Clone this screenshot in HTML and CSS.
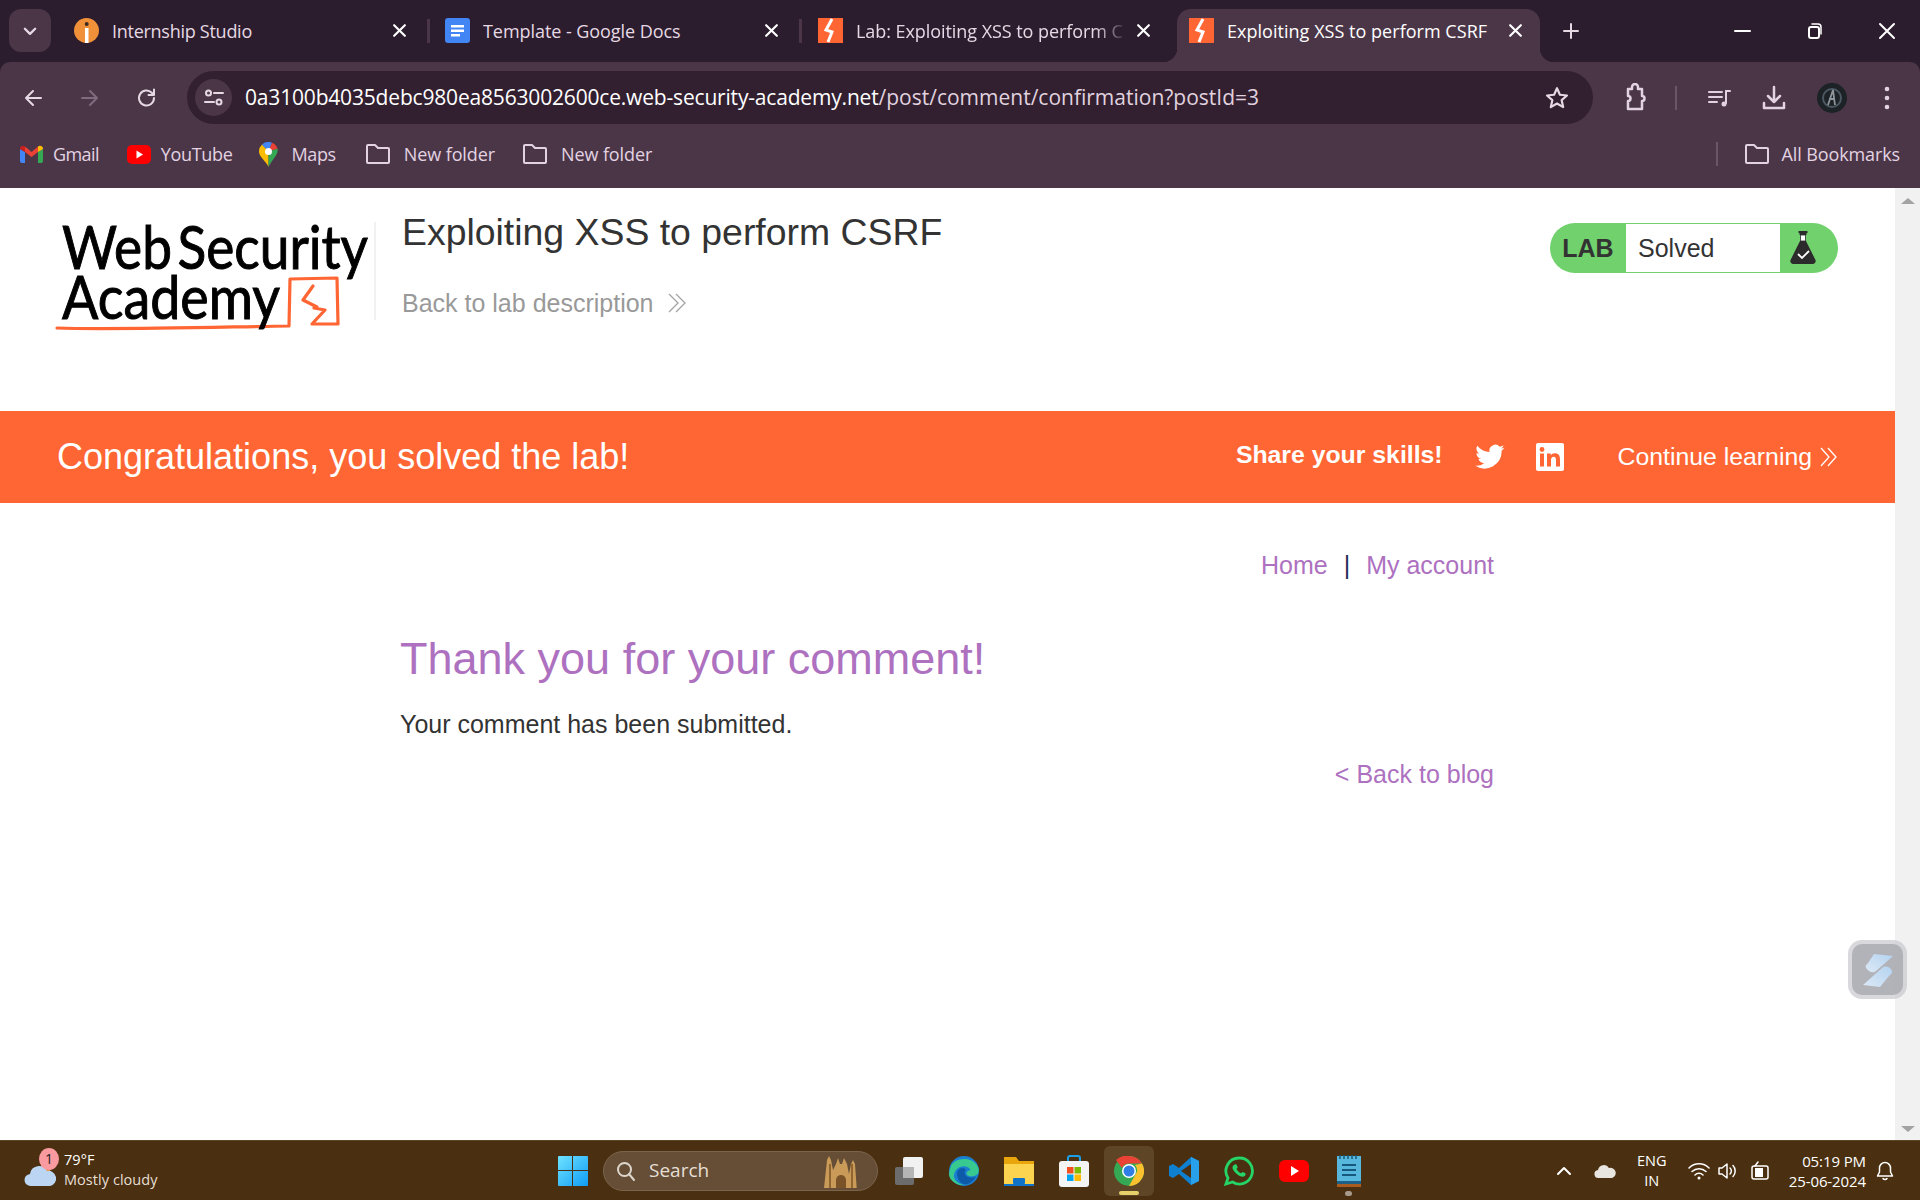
FILE: index.html
```html
<!DOCTYPE html>
<html lang="en">
<head>
<meta charset="utf-8">
<title>Exploiting XSS to perform CSRF</title>
<link rel="stylesheet" href="styles.css">
</head>
<body>
<div class="app">
  <div class="tabstrip">
    <div class="tab-menu"><svg width="16" height="16" viewBox="0 0 14 14"><path d="M2.5 5l4.500 4.500L11.500 5" class="st-light w2"/></svg></div>
    <div class="tab">
      <svg class="favicon" viewBox="0 0 25 25"><circle cx="12.500" cy="12.500" r="12.500" fill="#f0913a"/><rect x="11" y="10" width="3.500" height="15" fill="#fff"/><circle cx="12.700" cy="6" r="2" fill="#3a2a20"/></svg>
      <span class="tab-title">Internship Studio</span><svg class="tab-x" viewBox="0 0 14 14"><path d="M2 2l10 10M12 2L2 12" class="st-white w2"/></svg>
    </div>
    <i class="tab-sep"></i>
    <div class="tab tab-docs">
      <svg class="favicon" viewBox="0 0 25 25"><rect x="0" y="0" width="25" height="25" rx="3" fill="#4285f4"/><path d="M6 7h13v2.500H6zM6 11.500h13V14H6zM6 16h9v2.500H6z" fill="#fff"/></svg>
      <span class="tab-title tab-mid">Template - Google Docs</span><svg class="tab-x" viewBox="0 0 14 14"><path d="M2 2l10 10M12 2L2 12" class="st-white w2"/></svg>
    </div>
    <i class="tab-sep"></i>
    <div class="tab">
      <svg class="favicon" viewBox="0 0 25 25"><rect width="25" height="25" fill="#ff6633"/><path d="M14 1l-6 11 6 2-4 10" fill="none" stroke="#fff" stroke-width="3"/></svg>
      <span class="tab-title tab-mid tab-fade">Lab: Exploiting XSS to perform C</span><svg class="tab-x" viewBox="0 0 14 14"><path d="M2 2l10 10M12 2L2 12" class="st-white w2"/></svg>
    </div>
    <i class="tab-sep tab-sep-off"></i>
    <div class="tab tab-active">
      <svg class="favicon" viewBox="0 0 25 25"><rect width="25" height="25" fill="#ff6633"/><path d="M14 1l-6 11 6 2-4 10" fill="none" stroke="#fff" stroke-width="3"/></svg>
      <span class="tab-title tab-wide">Exploiting XSS to perform CSRF</span><svg class="tab-x" viewBox="0 0 14 14"><path d="M2 2l10 10M12 2L2 12" class="st-white w2"/></svg>
    </div>
    <svg class="tab-plus" width="20" height="20" viewBox="0 0 20 20"><path d="M10 3v14M3 10h14" class="st-light w2"/></svg>
    <div class="win-controls">
      <svg width="20" height="20" viewBox="0 0 20 20"><path d="M2 10h15" class="st-white w2"/></svg>
      <svg width="20" height="20" viewBox="0 0 20 20"><rect x="4" y="6" width="10" height="11" rx="2" class="st-white w2"/><path d="M7 3h6a3 3 0 0 1 3 3v7" class="st-white w15"/></svg>
      <svg width="20" height="20" viewBox="0 0 20 20"><path d="M3 3l14 14M17 3L3 17" class="st-white w2"/></svg>
    </div>
  </div>

  <div class="toolbar">
    <div class="nav-btns">
      <svg width="24" height="24" viewBox="0 0 24 24"><path d="M20 12H5M12 5l-7 7 7 7" class="st-light w2"/></svg>
      <svg width="24" height="24" viewBox="0 0 24 24"><path d="M4 12h15M12 5l7 7-7 7" class="st-dim w2"/></svg>
      <svg width="24" height="24" viewBox="0 0 24 24"><path d="M19 12a7.500 7.500 0 1 1-2.200-5.300L19 9M19 3.500V9h-5.500" class="st-light w2"/></svg>
    </div>
    <div class="omnibox">
      <div class="site-info"><svg width="22" height="22" viewBox="0 0 22 22"><circle cx="5.500" cy="6" r="2.500" class="st-light w2"/><path d="M11 6h9M2 15h9" class="st-light w2"/><circle cx="16" cy="15" r="2.500" class="st-light w2"/></svg></div>
      <div class="url"><span class="url-host">0a3100b4035debc980ea8563002600ce.web-security-academy.net</span><span class="url-path">/post/comment/confirmation?postId=3</span></div>
      <svg class="star" width="26" height="26" viewBox="0 0 24 24"><path d="M12 3l2.700 6 6.500.7-4.900 4.300 1.400 6.400L12 17.100l-5.700 3.300 1.400-6.400-4.900-4.300 6.500-.7z" class="st-light w2"/></svg>
    </div>
    <div class="tool-icons">
      <svg class="ti-ext" width="26" height="30" viewBox="0 0 26 30"><path d="M6 6h4V4a3 3 0 0 1 6 0v2h4v7a2.500 2.500 0 0 1 0 5v8H6v-8a2.500 2.500 0 0 0 0-5z" class="st-pale w25"/></svg>
      <i class="ti-sep"></i>
      <svg class="ti-media" width="26" height="26" viewBox="0 0 26 26"><path d="M3 7h13M3 12h13M3 17h8" class="st-pale w2"/><path d="M20 6v12" class="st-pale w2"/><circle cx="18" cy="19" r="2.500" fill="#e3d3e2"/><path d="M20 6h4" class="st-pale w2"/></svg>
      <svg class="ti-down" width="28" height="28" viewBox="0 0 28 28"><path d="M14 3v15M8 12l6 6 6-6" class="st-pale w25"/><path d="M4 19v5h20v-5" class="st-pale w25"/></svg>
      <svg class="ti-avatar" width="32" height="32" viewBox="0 0 32 32"><circle cx="16" cy="16" r="15" fill="#1d2226"/><circle cx="16" cy="16" r="9" fill="none" stroke="#4b5862" stroke-width="2"/><path d="M12 23l5-15 2 15M13 17h6" fill="none" stroke="#8d969c" stroke-width="1.800"/></svg>
      <svg class="ti-more" width="8" height="26" viewBox="0 0 8 26"><circle cx="4" cy="4" r="2.300" fill="#e3d3e2"/><circle cx="4" cy="13" r="2.300" fill="#e3d3e2"/><circle cx="4" cy="22" r="2.300" fill="#e3d3e2"/></svg>
    </div>
  </div>

  <div class="bookmarks">
    <div class="bm bm-gmail"><svg width="23" height="18" viewBox="0 0 23 18"><path d="M0 4v12a2 2 0 0 0 2 2h3V7z" fill="#4285f4"/><path d="M23 4v12a2 2 0 0 1-2 2h-3V7z" fill="#34a853"/><path d="M5 7l6.500 5L18 7V1.500L11.500 7 5 1.500z" fill="#ea4335"/><path d="M0 4a3 3 0 0 1 5-2.500V7z" fill="#c5221f"/><path d="M23 4a3 3 0 0 0-5-2.500V7z" fill="#fbbc04"/></svg><span>Gmail</span></div>
    <div class="bm bm-yt"><svg width="24" height="19" viewBox="0 0 24 19"><rect width="24" height="19" rx="5" fill="#ff0000"/><path d="M9.500 5.500l6.500 4-6.500 4z" fill="#fff"/></svg><span>YouTube</span></div>
    <div class="bm bm-maps"><svg width="19" height="25" viewBox="0 0 19 25"><path d="M9.500 25C7 19 0 15 0 9.500a9.500 9.500 0 0 1 3-7L9.500 9.500z" fill="#fbbc04"/><path d="M3 2.500A9.500 9.500 0 0 1 13 .7L9.500 9.500z" fill="#4285f4"/><path d="M13 .7a9.500 9.500 0 0 1 5.500 6L9.500 9.500z" fill="#ea4335"/><path d="M18.500 6.700c1.500 5-5.500 11-9 18.300V9.500z" fill="#34a853"/><circle cx="9.500" cy="9.500" r="3.500" fill="#fff"/></svg><span>Maps</span></div>
    <div class="bm bm-f1"><svg class="folder" viewBox="0 0 26 22"><path d="M2 3a1 1 0 0 1 1-1h7l3 3h10a1 1 0 0 1 1 1v13a1 1 0 0 1-1 1H3a1 1 0 0 1-1-1z" class="st-pale w2"/></svg><span>New folder</span></div>
    <div class="bm bm-f2"><svg class="folder" viewBox="0 0 26 22"><path d="M2 3a1 1 0 0 1 1-1h7l3 3h10a1 1 0 0 1 1 1v13a1 1 0 0 1-1 1H3a1 1 0 0 1-1-1z" class="st-pale w2"/></svg><span>New folder</span></div>
    <i class="bm-sep"></i>
    <div class="bm bm-all"><svg class="folder" viewBox="0 0 26 22"><path d="M2 3a1 1 0 0 1 1-1h7l3 3h10a1 1 0 0 1 1 1v13a1 1 0 0 1-1 1H3a1 1 0 0 1-1-1z" class="st-pale w2"/></svg><span>All Bookmarks</span></div>
  </div>

  <div class="viewport">
    <main class="page">
      <header class="lab-header">
        <svg class="logo" viewBox="0 188 376 150" role="img" aria-label="Web Security Academy">
          <path d="M57 328C110 330 220 327 289 326L290 279L337 278L338 324L312 324L325 310L314 308L317 307L303 300L313 286" class="logo-mark"/>
          <text x="62" y="269" textLength="306" lengthAdjust="spacingAndGlyphs" class="logo-text logo-line1">Web Security</text>
          <text x="62" y="319" textLength="218" lengthAdjust="spacingAndGlyphs" class="logo-text">Academy</text>
          <path d="M375 222v98" stroke="#e3e3e3" stroke-width="1"/>
        </svg>
        <div class="lab-title">
          <h2>Exploiting XSS to perform CSRF</h2>
          <a class="back-lab">Back to lab description <svg class="chev" width="20" height="20" viewBox="0 0 20 20"><path d="M2 1l9 9-9 9M9 1l9 9-9 9" fill="none" stroke="#a3a3a3" stroke-width="1.300"/></svg></a>
        </div>
        <div class="lab-status">
          <span class="lab-label">LAB</span>
          <span class="lab-state">Solved</span>
          <span class="lab-flask"><svg width="26" height="34" viewBox="0 0 26 34"><path d="M8.500 0h9v2h-1v2h-7V2h-1z" fill="#2b2b2b"/><path d="M10.500 4h5v6h-5z" fill="#fff" stroke="#2b2b2b" stroke-width="0.800"/><path d="M10 10h6l9.500 19a3 3 0 0 1-3 4H3.500a3 3 0 0 1-3-4z" fill="#2b2b2b"/><path d="M8 23l4 4 7-7" fill="none" stroke="#fff" stroke-width="1.800"/></svg></span>
        </div>
      </header>

      <section class="banner">
        <p class="banner-msg">Congratulations, you solved the lab!</p>
        <div class="banner-right">
          <strong class="share">Share your skills!</strong>
          <svg class="tw" width="30" height="26" viewBox="0 0 24 20"><path d="M23.500 2.400c-.9.400-1.800.7-2.800.8 1-.6 1.800-1.500 2.100-2.700-.9.600-2 1-3 1.200A4.800 4.800 0 0 0 11.600 6C7.700 5.800 4.200 3.900 1.800.9c-1.300 2.200-.6 5 1.500 6.400-.8 0-1.500-.2-2.200-.6 0 2.300 1.600 4.300 3.900 4.800-.7.200-1.400.2-2.200.1.600 1.900 2.400 3.300 4.500 3.400A9.700 9.700 0 0 1 .2 17a13.700 13.700 0 0 0 21.100-12.100c1-.7 1.700-1.500 2.200-2.500z" fill="#fff"/></svg>
          <svg class="li" width="28" height="28" viewBox="0 0 28 28"><rect width="28" height="28" rx="2" fill="#fff"/><rect x="4" y="10.500" width="4" height="13" fill="#ff6633"/><circle cx="6" cy="6.500" r="2.400" fill="#ff6633"/><path d="M11 10.500h3.800v1.900c.7-1.300 2.200-2.200 4-2.200 3.700 0 5.200 2.300 5.200 6v7.300h-4v-6.500c0-1.800-.5-3.300-2.300-3.300s-2.700 1.400-2.700 3.300v6.500h-4z" fill="#ff6633"/></svg>
          <a class="continue">Continue learning</a>
          <svg class="chev-w" width="18" height="20" viewBox="0 0 18 20"><path d="M1 1l8 9-8 9M8 1l8 9-8 9" fill="none" stroke="#fff" stroke-width="1.300"/></svg>
        </div>
      </section>

      <section class="content">
        <nav class="top-links"><a>Home</a><span class="pipe">|</span><a>My account</a></nav>
        <h1>Thank you for your comment!</h1>
        <p class="msg">Your comment has been submitted.</p>
        <div class="back-blog"><a>&lt; Back to blog</a></div>
      </section>
    </main>
    <aside class="scrollbar">
      <i class="arrow-up"></i>
      <i class="arrow-down"></i>
    </aside>
    <div class="float-widget">
      <div class="float-inner"><svg width="30" height="36" viewBox="0 0 30 36"><defs><linearGradient id="sg" x1="0" y1="1" x2="1" y2="0"><stop offset="0" stop-color="#dce9f6"/><stop offset="1" stop-color="#b4d3f0"/></linearGradient></defs><path d="M11 2l19 2L13 19c-3 3-8 0-10-3-1-2 0-3 2-5z" fill="url(#sg)"/><path d="M19 16c3-3 9-1 10 3 .5 2-1 3-3 5l-9 11-17-2z" fill="url(#sg)"/></svg></div>
    </div>
  </div>

  <footer class="taskbar">
    <div class="weather">
      <svg class="cloud" width="34" height="28" viewBox="0 0 34 28"><circle cx="22" cy="9" r="5" fill="#f08a2c"/><path d="M7 27a6 6 0 0 1-1-12 9 9 0 0 1 17-3 7.500 7.500 0 0 1 3 15z" fill="#bcd5f2"/></svg>
      <span class="badge">1</span>
      <div class="weather-text"><span class="temp">79°F</span><span class="cond">Mostly cloudy</span></div>
    </div>
    <div class="task-center">
      <svg class="winlogo" width="30" height="30" viewBox="0 0 30 30"><defs><linearGradient id="wl" x1="0" y1="0" x2="1" y2="1"><stop offset="0" stop-color="#6fe3ff"/><stop offset="1" stop-color="#0f9cf5"/></linearGradient></defs><path d="M0 1a1 1 0 0 1 1-1h13v14H0zM15 0h14a1 1 0 0 1 1 1v13H15zM0 15h14v15H1a1 1 0 0 1-1-1zM15 15h15v14a1 1 0 0 1-1 1H15z" fill="url(#wl)"/></svg>
      <div class="search">
        <svg width="22" height="22" viewBox="0 0 22 22"><circle cx="9.500" cy="9.500" r="6.500" class="st-search w2"/><path d="M14 14l5 6" class="st-search w2"/></svg>
        <span class="search-label">Search</span>
        <svg class="cathedral" width="38" height="34" viewBox="0 0 38 34"><path d="M2 34L5 6l2-4 2 4 2 10 3-6 2-6 2 6 2 0 2-6 3 6 2 10 2-10 2-4 2 4 2 28z" fill="#c99a58"/><path d="M14 34v-8a5 5 0 0 1 10 0v8z" fill="#7a5428"/><path d="M8 10v24M30 10v24" stroke="#8f6630" stroke-width="2"/></svg>
      </div>
      <div class="task-apps">
        <div class="app-slot"><svg width="30" height="30" viewBox="0 0 30 30"><rect x="1" y="11" width="19" height="18" rx="2" fill="#6c6c6c"/><rect x="9" y="1" width="20" height="21" rx="2" fill="#f1f1f1"/><rect x="9" y="11" width="11" height="11" fill="#b5b5b5"/></svg></div>
        <div class="app-slot"><svg width="32" height="32" viewBox="0 0 32 32"><circle cx="16" cy="16" r="15" fill="#1b7fd1"/><path d="M3 11C6 3 24 0 30 12c2 5 0 8-4 9-5 1-9-1-7-4 1-2 4-1 3-3C18 9 7 11 6 20c-1 4 4 9 10 10-7 1-14-4-15-10 0-3 1-6 2-9z" fill="#37c98f"/><path d="M9 19c0-6 7-8 9-4-2 1-2 5 2 7 3 1 6 1 8-1-2 5-7 9-12 8-4-1-7-5-7-10z" fill="#0d5aa8"/></svg></div>
        <div class="app-slot"><svg width="30" height="32" viewBox="0 0 30 32"><path d="M0 2h12l3 4h15v25H0z" fill="#e8a50c"/><path d="M0 9h30v22H0z" fill="#fcd44f"/><rect x="9" y="23" width="12" height="6" rx="1" fill="#1173c7"/><rect x="0" y="29" width="30" height="2" fill="#1173c7"/></svg></div>
        <div class="app-slot"><svg width="30" height="32" viewBox="0 0 30 32"><path d="M9 8V3a2 2 0 0 1 2-2h8a2 2 0 0 1 2 2v5" fill="none" stroke="#19a0e8" stroke-width="2"/><rect y="6" width="30" height="26" rx="3" fill="#f4f4f4"/><rect x="8" y="12" width="6.500" height="6.500" fill="#f25022"/><rect x="15.500" y="12" width="6.500" height="6.500" fill="#7fba00"/><rect x="8" y="19.500" width="6.500" height="6.500" fill="#00a4ef"/><rect x="15.500" y="19.500" width="6.500" height="6.500" fill="#ffb900"/></svg></div>
        <div class="app-slot app-current"><svg width="30" height="30" viewBox="0 0 30 30"><circle cx="15" cy="15" r="15" fill="#34a853"/><path d="M15 0a15 15 0 0 1 13 7.500H15A7.500 7.500 0 0 0 8 12L2 4A15 15 0 0 1 15 0z" fill="#ea4335"/><path d="M28 7.500A15 15 0 0 1 15 30l6.500-11.500A7.500 7.500 0 0 0 21 9z" fill="#fbc02d"/><circle cx="15" cy="15" r="7" fill="#fff"/><circle cx="15" cy="15" r="5.500" fill="#2e7ee6"/></svg><i class="app-bar"></i></div>
        <div class="app-slot"><svg width="30" height="30" viewBox="0 0 30 30"><path d="M22 1l8 4v20l-8 4-12-11-6 4-4-2V10l4-2 6 4z" fill="#0f7fd0"/><path d="M22 1v28l8-4V5z" fill="#29a0ea"/><path d="M22 8L12 15l10 7z" fill="#4a2f10"/></svg></div>
        <div class="app-slot"><svg width="30" height="30" viewBox="0 0 30 30"><path d="M15 2a13 13 0 0 0-11 20L2 28l6.500-2A13 13 0 1 0 15 2z" fill="none" stroke="#25d366" stroke-width="2.800"/><path d="M10 9c1-1 2.500-1 3 .5l.7 2-1.200 1.500c1 2 2.500 3.300 4.500 4.300l1.500-1.300 2.500 1c1 .5.800 2-.2 3-2 1.500-5 .5-8-2s-5-5.500-4-8z" fill="#25d366"/></svg></div>
        <div class="app-slot"><svg width="30" height="30" viewBox="0 0 30 30"><rect y="4" width="30" height="22" rx="6" fill="#f00"/><path d="M12 10l8 5-8 5z" fill="#fff"/></svg></div>
        <div class="app-slot"><svg width="24" height="32" viewBox="0 0 24 32"><rect y="1" width="24" height="28" fill="#57b7dd"/><rect y="26" width="24" height="3" fill="#1e5f86"/><rect y="29" width="24" height="3" fill="#a85c20"/><path d="M5 10h14M5 15h14M5 20h14" stroke="#17597c" stroke-width="2"/><path d="M3 0v4M7 0v4M11 0v4M15 0v4M19 0v4" stroke="#17597c" stroke-width="1.500"/></svg><i class="app-dot"></i></div>
      </div>
    </div>
    <div class="tray">
      <svg class="caret" width="16" height="16" viewBox="0 0 16 16"><path d="M2 11l6-6 6 6" class="st-white w2"/></svg>
      <svg class="tray-cloud" width="22" height="16" viewBox="0 0 22 16"><path d="M5 15a4 4 0 0 1-1-8 6 6 0 0 1 11-2 5 5 0 0 1 3 10z" fill="#e8e4df"/></svg>
      <div class="lang"><span>ENG</span><span>IN</span></div>
      <svg class="wifi" width="22" height="18" viewBox="0 0 22 18"><path d="M1 6a14 14 0 0 1 20 0M4 9.500a10 10 0 0 1 14 0M7 13a5.500 5.500 0 0 1 8 0" class="st-white w15"/><circle cx="11" cy="16" r="1.500" fill="#fff"/></svg>
      <svg class="vol" width="22" height="18" viewBox="0 0 22 18"><path d="M1 6h3l5-4v14l-5-4H1z" class="st-white w15"/><path d="M12 6a4 4 0 0 1 0 6M15 3.500a8 8 0 0 1 0 11" class="st-white w15"/></svg>
      <svg class="batt" width="20" height="20" viewBox="0 0 20 20"><rect x="2" y="5" width="16" height="13" rx="2" class="st-white w15"/><path d="M5 7h8v9H5z" fill="#fff"/><path d="M5 5l3-4" class="st-white w15"/></svg>
      <div class="clock"><span>05:19 PM</span><span>25-06-2024</span></div>
      <svg class="bell" width="18" height="20" viewBox="0 0 18 20"><path d="M9 1.500a5.500 5.500 0 0 0-5.500 5.500v4L1.500 15h15l-2-4V7A5.500 5.500 0 0 0 9 1.500zM7 17.500a2.500 2.500 0 0 0 4 0" class="st-white w15"/></svg>
    </div>
  </footer>
</div>
</body>
</html>
```

FILE: styles.css
```css
* { box-sizing: border-box; }
html, body { margin: 0; padding: 0; height: 100%; overflow: hidden; background: #fff; }
a { color: inherit; text-decoration: none; }
i { display: block; }

.st-light, .st-dim, .st-pale, .st-white, .st-search { fill: none; stroke-linecap: round; stroke-linejoin: round; }
.st-light { stroke: #e6d9e4; }
.st-dim { stroke: #806a7e; }
.st-pale { stroke: #e3d3e2; }
.st-white { stroke: #fff; }
.st-search { stroke: #ddd6cc; }
.w15 { stroke-width: 1.5; }
.w2 { stroke-width: 2; }
.w25 { stroke-width: 2.5; }

.app { width: 1920px; height: 1200px; display: flex; flex-direction: column; position: relative; font-family: "Liberation Sans", Arial, sans-serif; background: #2c1d2e; }

/* tab strip */
.tabstrip { height: 62px; background: #2c1d2e; display: flex; align-items: flex-end; padding-left: 9px; font-family: "Open Sans", sans-serif; color: #e6d9e4; flex: none; }
.tab-menu { width: 42px; height: 43px; background: #4b3648; border-radius: 12px; display: flex; align-items: center; justify-content: center; margin: 0 10px 10px 0; flex: none; }
.tab { width: 363px; height: 53px; display: flex; align-items: center; padding: 0 17px 10px 13px; flex: none; position: relative; }
.tab-docs { padding-left: 12px; }
.tab-active { background: #4b3648; border-radius: 14px 14px 0 0; color: #fff; padding-left: 12px; }
.tab-active::before, .tab-active::after { content: ""; position: absolute; bottom: 0; width: 14px; height: 14px; }
.tab-active::before { left: -14px; background: radial-gradient(circle at 0 0, transparent 14px, #4b3648 14.5px); }
.tab-active::after { right: -14px; background: radial-gradient(circle at 100% 0, transparent 14px, #4b3648 14.5px); }
.favicon { width: 25px; height: 25px; flex: none; margin-right: 13px; }
.tab-title { flex: 1; font-size: 18px; letter-spacing: -0.27px; white-space: nowrap; overflow: hidden; }
.tab-mid { letter-spacing: -0.06px; }
.tab-wide { letter-spacing: 0.03px; }
.tab-fade { -webkit-mask-image: linear-gradient(90deg, #000 88%, transparent 100%); mask-image: linear-gradient(90deg, #000 88%, transparent 100%); }
.tab-x { width: 15px; height: 15px; margin-left: 8px; flex: none; }
.tab-sep { width: 3px; height: 24px; background: #4b3648; margin: 0 3px 19px; flex: none; }
.tab-sep-off { background: transparent; }
.tab-plus { flex: none; margin: 0 0 21px 21px; }
.win-controls { margin-left: auto; display: flex; gap: 52px; padding-right: 23px; padding-bottom: 21px; }

/* toolbar */
.toolbar { height: 66px; background: #4b3648; display: flex; align-items: flex-start; flex: none; border-radius: 10px 10px 0 0; }
.nav-btns { width: 187px; display: flex; gap: 33px; padding: 24px 0 0 21px; flex: none; }
.omnibox { width: 1406px; height: 53px; margin-top: 9px; background: #321f30; border-radius: 27px; display: flex; align-items: center; padding: 0 23px 0 8px; flex: none; }
.site-info { width: 37px; height: 37px; border-radius: 50%; background: #4b3648; display: flex; align-items: center; justify-content: center; flex: none; }
.url { flex: 1; font-family: "Open Sans", sans-serif; font-size: 21px; margin-left: 13px; white-space: nowrap; margin-top: -2px; }
.url-host { color: #fff; letter-spacing: -0.18px; }
.url-path { color: #e0d2df; letter-spacing: 0; }
.star { flex: none; }
.tool-icons { display: flex; align-items: center; height: 53px; margin-top: 9px; flex: none; }
.ti-ext { margin-left: 29px; }
.ti-sep { width: 2px; height: 24px; background: #6b5468; margin-left: 27px; }
.ti-media { margin-left: 29px; }
.ti-down { margin-left: 28px; }
.ti-avatar { margin-left: 28px; }
.ti-more { margin-left: 35px; }

/* bookmarks */
.bookmarks { height: 60px; background: #4b3648; display: flex; align-items: center; color: #e3d3e2; font-family: "Open Sans", sans-serif; font-size: 18px; letter-spacing: -0.35px; flex: none; position: relative; padding-bottom: 8px; }
.bm { display: flex; align-items: center; flex: none; }
.folder { width: 26px; height: 22px; flex: none; }
.bm-gmail { margin-left: 20px; gap: 10px; letter-spacing: -0.6px; }
.bm-yt { margin-left: 28px; gap: 10px; }
.bm-maps { margin-left: 27px; gap: 13px; }
.bm-f1 { margin-left: 29px; gap: 13px; letter-spacing: -0.1px; }
.bm-f2 { margin-left: 27px; gap: 13px; letter-spacing: -0.1px; }
.bm-sep { width: 2px; height: 24px; background: #6b5468; margin-left: auto; }
.bm-all { margin-left: 26px; margin-right: 20px; gap: 12px; letter-spacing: -0.12px; }

/* page */
.viewport { flex: 1; display: flex; min-height: 0; position: relative; background: #fff; }
.page { flex: 1; min-width: 0; color: #333; }
.lab-header { height: 223px; display: flex; align-items: flex-start; padding-right: 57px; }
.logo { width: 376px; height: 150px; flex: none; }
.logo-text { font-family: Lato, sans-serif; font-size: 60px; font-weight: 400; fill: #000; stroke: #000; stroke-width: 1; }
.logo-line1 { word-spacing: -9px; }
.logo-mark { fill: none; stroke: #ff6633; stroke-width: 3.2; stroke-linejoin: round; stroke-linecap: round; }
.lab-title { margin-left: 26px; padding-top: 22px; flex: 1; }
.lab-title h2 { margin: 0; font-size: 37.4px; line-height: 44px; font-weight: 400; color: #333; }
.back-lab { display: flex; align-items: center; gap: 13px; margin-top: 35px; font-size: 25px; line-height: 28px; color: #999; }
.chev { flex: none; }
.lab-status { margin-top: 35px; width: 288px; height: 50px; background: #70d16d; border-radius: 25px; display: flex; align-items: center; padding: 1px 0; flex: none; color: #333; }
.lab-label { width: 76px; text-align: center; font-weight: 700; font-size: 25px; }
.lab-state { width: 154px; height: 48px; background: #fff; display: flex; align-items: center; padding-left: 12px; font-size: 25px; }
.lab-flask { flex: 1; display: flex; justify-content: center; padding-right: 12px; }

.banner { height: 92px; background: #ff6633; color: #fff; display: flex; align-items: center; padding: 0 57px 0 57px; }
.banner-msg { margin: 0; font-size: 36px; flex: 1; }
.banner-right { display: flex; align-items: center; }
.share { font-size: 24.8px; margin-top: -4px; }
.tw { margin-left: 32px; }
.li { margin-left: 31px; }
.continue { font-size: 24.8px; margin-left: 54px; margin-top: -1px; }
.chev-w { margin-left: 8px; }

.content { margin-left: 400px; width: 1094px; color: #333; }
.top-links { display: flex; justify-content: flex-end; align-items: center; gap: 16px; padding-top: 48px; font-size: 25px; line-height: 28px; color: #ad71c0; }
.pipe { color: #29315a; }
.content h1 { margin: 54px 0 0; font-size: 45px; line-height: 52px; font-weight: 400; color: #ad71c0; }
.msg { margin: 25px 0 0; font-size: 25px; line-height: 28px; }
.back-blog { text-align: right; margin-top: 22px; font-size: 25px; line-height: 28px; color: #ad71c0; }

.scrollbar { width: 25px; background: #f1f1f1; flex: none; position: relative; display: flex; flex-direction: column; justify-content: space-between; align-items: center; padding: 10px 0 8px; }
.arrow-up { width: 0; height: 0; border: 7px solid transparent; border-top: 0; border-bottom: 6px solid #a3a3a3; }
.arrow-down { width: 0; height: 0; border: 7px solid transparent; border-bottom: 0; border-top: 6px solid #a3a3a3; }

.float-widget { position: absolute; right: 13px; top: 752px; width: 59px; height: 59px; border-radius: 14px; background: rgba(200, 200, 206, 0.7); padding: 4px; }
.float-inner { width: 100%; height: 100%; border-radius: 10px; background: rgba(165, 165, 172, 0.75); display: flex; align-items: center; justify-content: center; }

/* taskbar */
.taskbar { height: 60px; background: #4a2f10; border-top: 1px solid #5c4527; display: flex; align-items: center; color: #fff; font-family: "Open Sans", sans-serif; flex: none; position: relative; }
.weather { width: 558px; display: flex; align-items: center; padding-left: 24px; position: relative; flex: none; height: 100%; }
.cloud { flex: none; margin-top: 5px; }
.badge { position: absolute; left: 39px; top: 7px; width: 20px; height: 22px; border-radius: 50%; background: #f89aa0; color: #222; font-size: 14px; line-height: 22px; text-align: center; }
.weather-text { display: flex; flex-direction: column; margin-left: 6px; margin-top: -2px; line-height: 20px; font-size: 14.5px; letter-spacing: 0.05px; }
.cond { color: #e6dfd5; }
.task-center { display: flex; align-items: center; flex: none; }
.winlogo { flex: none; }
.search { width: 275px; height: 40px; margin-left: 15px; border-radius: 20px; background: #654e35; border: 1px solid #7a654c; display: flex; align-items: center; padding-left: 11px; font-size: 19px; color: #e6dfd5; gap: 12px; flex: none; }
.search-label { margin-top: -2px; }
.cathedral { margin-left: auto; margin-right: 17px; }
.task-apps { display: flex; margin-left: 3px; }
.app-slot { width: 55px; height: 50px; display: flex; align-items: center; justify-content: center; position: relative; }
.app-current { width: 50px; margin: 0 2.5px; background: #5d4526; border-radius: 6px; }
.app-bar { position: absolute; left: 15px; bottom: 1px; width: 20px; height: 4px; border-radius: 2px; background: #e6d06a; }
.app-dot { position: absolute; left: 24px; bottom: 0; width: 7px; height: 5px; border-radius: 3px; background: #a89a8a; }
.tray { margin-left: auto; display: flex; align-items: center; padding-right: 26px; }
.caret { margin-right: 22px; }
.tray-cloud { margin-right: 14px; }
.lang, .clock { display: flex; flex-direction: column; line-height: 20px; font-size: 15px; }
.lang { align-items: center; width: 44px; font-size: 14.5px; }
.wifi { margin-left: 14px; }
.vol { margin-left: 8px; }
.batt { margin-left: 10px; }
.clock { align-items: flex-end; margin-left: 19px; letter-spacing: -0.1px; }
.bell { margin-left: 10px; }
```
